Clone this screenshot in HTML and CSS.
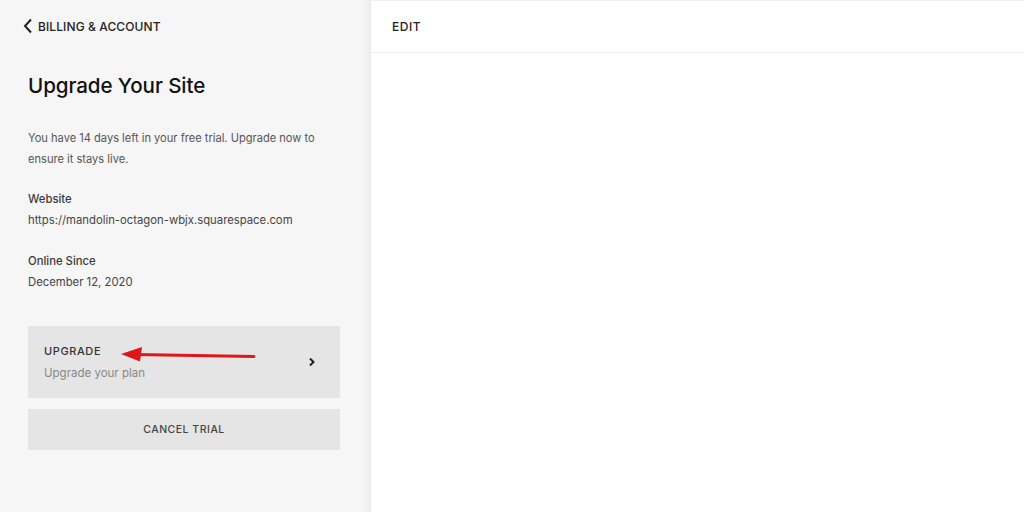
FILE: index.html
```html
<!DOCTYPE html>
<html>
<head>
<meta charset="utf-8">
<link rel="stylesheet" href="styles.css">
</head>
<body>
<div class="app">
  <aside class="panel">
    <a class="back">
      <svg class="back-icon" width="10" height="16" viewBox="0 0 10 16"><path d="M8 1.5 L2 8 L8 14.5" fill="none" stroke="#222" stroke-width="2"/></svg>
      <span>BILLING &amp; ACCOUNT</span>
    </a>
    <h1 class="title">Upgrade Your Site</h1>
    <p class="desc">You have 14 days left in your free trial. Upgrade now to ensure it stays live.</p>
    <div class="field">
      <div class="label">Website</div>
      <div class="value">https://mandolin-octagon-wbjx.squarespace.com</div>
    </div>
    <div class="field">
      <div class="label">Online Since</div>
      <div class="value">December 12, 2020</div>
    </div>
    <div class="card">
      <div class="card-text">
        <div class="card-title">UPGRADE</div>
        <div class="card-sub">Upgrade your plan</div>
      </div>
      <svg class="card-chev" width="8" height="10" viewBox="0 0 8 10"><path d="M2 1.5 L5.5 5 L2 8.5" fill="none" stroke="#222" stroke-width="2"/></svg>
      <svg class="arrow" width="140" height="20" viewBox="0 0 140 20"><path d="M14 9.5 L133 11.5" stroke="#e0161b" stroke-width="3" stroke-linecap="round"/><path d="M0 9 L21 2 L19 16.5 Z" fill="#e0161b"/></svg>
    </div>
    <button class="cancel">CANCEL TRIAL</button>
  </aside>
  <main class="main">
    <header class="main-head">EDIT</header>
  </main>
</div>
</body>
</html>
```
FILE: styles.css
```css
* { box-sizing: border-box; }
html, body { margin: 0; padding: 0; }
body {
  font-family: Inter, "Liberation Sans", Arial, sans-serif;
  background: #fff;
  color: #222;
  width: 1024px;
  height: 512px;
  overflow: hidden;
}
.app { display: flex; height: 512px; }
.panel {
  width: 371px;
  flex: none;
  background: #f6f6f6;
  padding: 0 31px 0 28px;
  position: relative;
  box-shadow: inset -8px 0 8px -6px rgba(0,0,0,0.06);
}
.back {
  display: flex;
  align-items: center;
  gap: 5px;
  margin-left: -5px;
  height: 52px;
  font-size: 12px;
  font-weight: 500;
  letter-spacing: 0.1px;
  color: #222;
}
.back-icon { display: block; }
.title {
  margin: 20px 0 0;
  font-size: 20.6px;
  font-weight: 500;
  line-height: 28px;
  color: #111;
  letter-spacing: -0.1px;
}
.desc {
  margin: 28px 0 0;
  font-size: 11.1px;
  line-height: 21px;
  color: #555;
}
.field { margin-top: 19px; }
.field + .field { margin-top: 20px; }
.label {
  font-size: 11.3px;
  line-height: 21px;
  font-weight: 500;
  color: #3a3a3a;
}
.value {
  font-size: 11.3px;
  line-height: 21px;
  color: #444;
}
.card {
  margin-top: 33px;
  height: 72px;
  background: #e5e5e5;
  display: flex;
  align-items: center;
  justify-content: space-between;
  padding: 0 24px 0 16px;
  position: relative;
}
.card-title {
  font-size: 11px;
  font-weight: 500;
  letter-spacing: 0.6px;
  color: #333;
  line-height: 16px;
}
.card-sub {
  margin-top: 6px;
  font-size: 11.5px;
  color: #888;
  line-height: 16px;
}
.card-chev { display: block; margin-top: 0; }
.arrow {
  position: absolute;
  left: 93px;
  top: 19px;
}
.cancel {
  display: block;
  width: 100%;
  margin-top: 11px;
  height: 41px;
  border: 0;
  background: #e5e5e5;
  font-family: inherit;
  font-size: 10.5px;
  font-weight: 500;
  letter-spacing: 0.5px;
  color: #444;
}
.main { flex: 1; border-top: 1px solid #f0f0f0; }
.main-head {
  height: 52px;
  border-bottom: 1px solid #eee;
  display: flex;
  align-items: center;
  padding-left: 21px;
  font-size: 12px;
  font-weight: 500;
  letter-spacing: 0.5px;
  color: #222;
}
```
